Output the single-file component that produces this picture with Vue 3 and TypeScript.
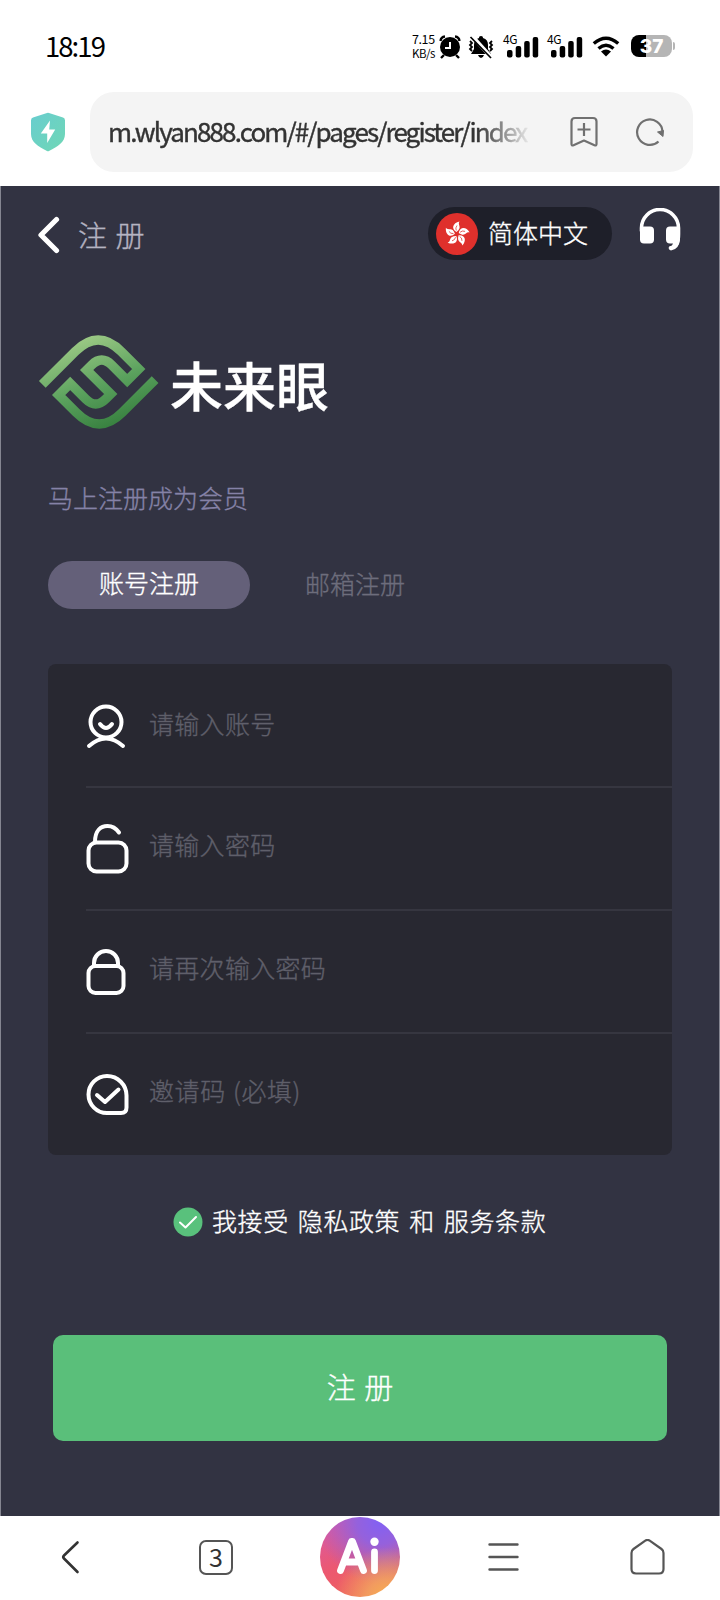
<script setup lang="ts">
interface Field {
  icon: 'user' | 'unlock' | 'lock' | 'check'
  type: string
  placeholder: string
}

const fields: Field[] = [
  { icon: 'user', type: 'text', placeholder: '请输入账号' },
  { icon: 'unlock', type: 'password', placeholder: '请输入密码' },
  { icon: 'lock', type: 'password', placeholder: '请再次输入密码' },
  { icon: 'check', type: 'text', placeholder: '邀请码 (必填)' },
]
const petals: number[] = [0, 72, 144, 216, 288]
</script>

<template>
  <div class="screen">
    <header class="status">
      <span class="clock">18:19</span>
      <div class="indicators">
        <div class="rate"><span>7.15</span><span class="unit">KB/s</span></div>
        <svg class="alarm" width="22" height="24" viewBox="0 0 22 24">
          <path d="M1.500 6Q2 2 6 1.500M16 1.500q4 .5 4.500 4.500M5 20l-3 3M17 20l3 3" fill="none" stroke="#000" stroke-width="2.400" />
          <circle cx="11" cy="12" r="10" />
          <path d="M11 7v6H6" fill="none" stroke="#fff" stroke-width="2" />
        </svg>
        <svg class="bell" width="26" height="24" viewBox="0 0 26 24">
          <path d="M13 1c1.500 0 2 .7 2 2 3.500 1 5 3.500 5 7v4l3 5H3l3-5v-4c0-3.500 1.500-6 5-7 0-1.300.5-2 2-2zM10 20h6q-1 3-3 3t-3-3z" />
          <path d="M2 6l2 2-2 2 2 2-2 2 2 2M24 6l-2 2 2 2-2 2 2 2-2 2" fill="none" stroke="#000" stroke-width="1.800" />
          <path d="M4 1l20 22" stroke="#fff" stroke-width="4" />
          <path d="M2.500 2l20.500 21" stroke="#000" stroke-width="1.700" />
        </svg>
        <div v-for="n in 2" :key="n" class="signal">
          <span class="net">4G</span>
          <svg width="36" height="26" viewBox="0 0 36 26">
            <rect x="4" y="18" width="5.500" height="7.500" rx="2" /><rect x="12.700" y="14" width="5.500" height="11.500" rx="2" />
            <rect x="21.200" y="9" width="5.500" height="16.500" rx="2" /><rect x="29.700" y="5" width="5.500" height="20.500" rx="2" />
          </svg>
        </div>
        <svg class="wifi" width="28" height="21" viewBox="0 0 28 21">
          <path d="M1.800 7.500Q14-3.200 26.200 7.500M6.500 12.500q7.500-6.500 15 0" fill="none" stroke="#000" stroke-width="3.400" />
          <path d="M9 15.500q5-4 10 0L14 20.500z" />
        </svg>
        <div class="battery"><span>37</span></div>
      </div>
    </header>

    <div class="browser">
      <svg class="shield" width="36" height="40" viewBox="0 0 36 40">
        <defs><linearGradient id="mint" x1="0" y1="0" x2="1" y2="1"><stop stop-color="#68cdcf" /><stop offset="1" stop-color="#70d7b5" /></linearGradient></defs>
        <path d="M17 1q1-.6 2 0l14 4.500q2 .7 2 3V22c0 8-7 12.500-16 17q-1 .5-2 0C8 34.500 1 30 1 22V8.500q0-2.300 2-3z" fill="url(#mint)" />
        <path d="M20 8.500L10.800 21.500h6.400v9.500l8-13.500h-6z" fill="#fff" />
      </svg>
      <div class="address">
        <span class="url">m.wlyan888.com/#/pages/register/index</span>
        <svg class="bookmark" width="28" height="32" viewBox="0 0 28 32" fill="none" stroke="#707070" stroke-width="2.200" stroke-linejoin="round">
          <path d="M5 2h18q3.500 0 3.500 3.500V28q0 2-2 1.300L14 24.500 3.500 29.300q-2 .7-2-1.300V5.500Q1.500 2 5 2zM7.500 13.500h13M14 7v13" />
        </svg>
        <svg class="reload" width="30" height="30" viewBox="0 0 30 30">
          <path d="M23.500 24.500a12.700 12.700 0 1 1 4-10" fill="none" stroke="#707070" stroke-width="2.200" />
          <path d="M22.500 15l6-1.500-.5 6z" fill="#707070" stroke="#707070" stroke-linejoin="round" />
        </svg>
      </div>
    </div>

    <main class="page">
      <nav class="topbar">
        <svg class="back" width="24" height="38" viewBox="0 0 24 38"><path d="M19.500 3.500L4 19 19.500 34.500" fill="none" stroke="#fff" stroke-width="5.200" stroke-linecap="round" stroke-linejoin="round" /></svg>
        <h1>注 册</h1>
        <button class="language">
          <svg width="42" height="42" viewBox="-21 -21 42 42">
            <circle r="21" fill="#df302c" />
            <g v-for="angle in petals" :key="angle" :transform="`rotate(${angle})`">
              <path d="M-.5-2C-6-5-4.500-11 2.500-12.500 0-9 6-7-.5-2z" fill="#fff" />
              <path d="M-.7-3.500Q-2-6 0-8.500" fill="none" stroke="#df302c" stroke-width=".7" />
            </g>
          </svg>
          <span>简体中文</span>
        </button>
        <svg class="support" width="42" height="43" viewBox="0 0 42 43">
          <path d="M2.500 23v-3a18.500 18.500 0 0 1 37 0v6c0 7-1 12.500-8 14" fill="none" stroke="#fff" stroke-width="3.600" stroke-linecap="round" />
          <rect x="1" y="18.500" width="14" height="17" rx="4" fill="#fff" /><path d="M31 18.500h10v13q-1 10-9 11-2.500-1-1.500-4 3-.3 3.500-3h-3q-4 0-4-4v-9q0-4 4-4z" fill="#fff" />
        </svg>
      </nav>

      <div class="brand">
        <svg width="122" height="96" viewBox="0 0 122 96">
          <defs><linearGradient id="leaf" gradientUnits="userSpaceOnUse" x1="-25" y1="-45" x2="10" y2="47"><stop stop-color="#a1cc88" /><stop offset=".55" stop-color="#5ba25e" /><stop offset="1" stop-color="#37803f" /></linearGradient></defs>
          <path transform="translate(60.700 47)" fill="none" stroke="url(#leaf)" stroke-width="9.500" d="M-56.400 2.300L-23.500-30.500Q-.5-53.500 22.500-30.500L40-13 28.500-1.500 13-17Q3-27-7-17L-12-12 12 12 7 17Q-3 27-13 17L-28.500 1.500-40 13-22.500 30.500Q.5 53.500 23.500 30.500L56.400-2.300" />
        </svg>
        <strong>未来眼</strong>
      </div>
      <p class="intro">马上注册成为会员</p>

      <div class="tabs">
        <button class="tab active">账号注册</button>
        <button class="tab">邮箱注册</button>
      </div>

      <form class="card" @submit.prevent>
        <label v-for="field in fields" :key="field.icon" class="field">
          <svg width="44" height="52" viewBox="0 0 44 52" fill="none" stroke="#fff" stroke-width="4" stroke-linecap="round" stroke-linejoin="round">
            <template v-if="field.icon === 'user'"><circle cx="20" cy="23" r="15.500" /><path d="M14 25q6 8 12 0M3 47q17-15 34 0" /></template>
            <template v-else-if="field.icon === 'unlock'"><rect x="2.500" y="19.500" width="38" height="29" rx="8" /><path d="M9 19C9 7 15 3 21.500 3q7 0 11.500 6.500" /></template>
            <template v-else-if="field.icon === 'lock'"><rect x="2.500" y="20" width="35" height="27" rx="7" /><path d="M8 20v-3a12 12 0 0 1 24 0v3" /></template>
            <template v-else><path d="M21 7a19.500 19.500 0 0 1 19.500 19.500V38.500q0 5.500-5.500 5.500H21A18.500 18.500 0 0 1 21 7zM11 26l8 7L32.500 20.500" /></template>
          </svg>
          <input :class="field.icon" :type="field.type" :placeholder="field.placeholder" />
        </label>
      </form>

      <div class="agreement">
        <svg width="30" height="30" viewBox="0 0 30 30"><circle cx="15" cy="15" r="14.500" fill="#59c17c" /><path d="M7 15.500l5.500 5L23 10" fill="none" stroke="#fff" stroke-width="2" stroke-linecap="round" stroke-linejoin="round" /></svg>
        <span>我接受</span><a>隐私政策</a><span>和</span><a>服务条款</a>
      </div>
      <button class="submit">注 册</button>
    </main>

    <footer class="toolbar">
      <svg width="36" height="36" viewBox="0 0 36 36" fill="none" stroke="#333" stroke-width="2.600" stroke-linecap="round" stroke-linejoin="round"><path d="M23.500 3.500L10 16.500q-1.500 1.500 0 3L23.500 33" /></svg>
      <div class="pages"><span>3</span></div>
      <div class="assistant">
        <svg width="48" height="40" viewBox="0 0 48 40" role="img" aria-label="Ai" fill="none" stroke="#fff" stroke-width="6.800" stroke-linecap="round" stroke-linejoin="round">
          <path d="M4.500 33.500L15.500 4.500h1l11 29M9 25h15M38.500 15v18.500" /><circle cx="38.500" cy="4.700" r="4.200" fill="#fff" stroke="none" />
        </svg>
      </div>
      <svg width="36" height="36" viewBox="0 0 36 36" fill="none" stroke="#555" stroke-width="2.400" stroke-linecap="round"><path d="M3.500 5.500h28M3.500 18h28M3.500 30.500h28" /></svg>
      <svg width="36" height="36" viewBox="0 0 36 36" fill="none" stroke="#555" stroke-width="2.200" stroke-linejoin="round"><path d="M15.300 1.700q2.200-1.500 4.400 0L31.500 10q2 1.500 2 4v16q0 4.500-4.500 4.500H6Q1.500 34.500 1.500 30V14q0-2.500 2-4z" /></svg>
    </footer>
  </div>
</template>

<style>
body { margin: 0; background: #fff; }
</style>
<style scoped>
.screen { width: 720px; height: 1600px; overflow: hidden; display: flex; flex-direction: column; background: #fff; font-family: "Noto Sans CJK SC", sans-serif; font-weight: 300; }
svg { display: block; flex: none; }
button { border: 0; padding: 0; background: none; font: inherit; color: inherit; white-space: nowrap; }
.status { height: 92px; box-sizing: border-box; display: flex; justify-content: space-between; padding: 33px 48px 0 45px; }
.clock { font-size: 27.500px; line-height: 25px; letter-spacing: -1.950px; color: #000; font-weight: 400; }
.indicators { display: flex; align-items: flex-start; }
.rate { display: flex; flex-direction: column; width: 27px; margin-top: -1px; font-size: 12.500px; line-height: 14px; font-weight: 400; letter-spacing: -.4px; }
.unit { font-size: 11.500px; letter-spacing: -.5px; }
.alarm { margin: 2px 0 0; }
.bell { margin: 2px 9px 0 7px; }
.signal { position: relative; margin: -1px 8px 0 0; }
.net { position: absolute; left: 0; top: 0; font-size: 12px; line-height: 13px; letter-spacing: -.5px; font-weight: 400; color: #000; }
.wifi { margin: 3px 11px 0 1px; }
.battery { position: relative; margin-top: 2px; width: 41px; height: 22px; border-radius: 8px; background: linear-gradient(90deg, #000 37%, #b5b5b5 37%); color: #fff; text-align: center; font: 800 19px/23px Inter, sans-serif; }
.battery::after { content: ""; position: absolute; right: -3px; top: 7px; width: 2px; height: 8px; border-radius: 0 3px 3px 0; background: #b5b5b5; }
.browser { height: 94px; display: flex; align-items: flex-start; padding: 0 27px 0 30px; }
.shield { margin-top: 20px; }
.address { margin-left: 24px; width: 603px; height: 80px; box-sizing: border-box; border-radius: 24px; background: #f4f4f4; display: flex; align-items: center; padding: 0 28px 0 18px; }
.url { width: 420px; margin-top: -2px; font-size: 26px; line-height: 40px; letter-spacing: -1.900px; color: #333; font-weight: 400; -webkit-text-stroke: .4px #333; white-space: nowrap; -webkit-mask-image: linear-gradient(90deg, #000 88%, transparent 101%); mask-image: linear-gradient(90deg, #000 88%, transparent 101%); }
.bookmark { margin-left: 42px; }
.reload { margin-left: 37px; }
.page { flex: none; height: 1330px; box-sizing: border-box; background: #323342; border-left: 1px solid #858691; border-right: 1px solid #858691; overflow: hidden; -webkit-text-stroke: .35px currentColor; }
.topbar { height: 98px; display: flex; align-items: center; padding-left: 36px; box-sizing: border-box; }
h1 { flex: none; margin: -2px 0 0 6px; padding-left: 11px; box-sizing: border-box; width: 361px; font-size: 29px; line-height: 40px; word-spacing: 2px; font-weight: 300; color: #b5b4c2; }
.back { margin-top: -1px; }
.language { width: 184px; height: 53px; flex: none; border-radius: 27px; display: flex; align-items: center; background: #1e1f29; color: #fff; font-size: 25px; margin-top: -3px; }
.language svg { margin: 0 10px 0 8px; }
.language span { margin-top: -3px; }
.support { margin: -11px 0 0 27px; }
.brand { display: flex; align-items: center; height: 96px; margin: 51px 0 0 37px; }
.brand strong { margin: 2px 0 0 10px; font-size: 53px; line-height: 70px; color: #fff; font-weight: 500; }
.intro { margin: 46px 0 0 47px; font-size: 25px; line-height: 40px; color: #8582a7; }
.tabs { margin: 44px 0 0 47px; display: flex; }
.tab { width: 202px; height: 48px; border-radius: 24px; font-size: 25px; line-height: 43px; padding-bottom: 5px; color: #6d6d7c; }
.tab + .tab { margin-left: 4px; padding-bottom: 3px; line-height: 45px; }
.tab.active { background: #646079; color: #fff; }
.card { margin: 55px 0 0 47px; width: 624px; height: 491px; border-radius: 8px; background: #282831; overflow: hidden; }
.field { height: 123px; margin-left: 38px; box-sizing: border-box; display: flex; align-items: center; border-bottom: 2px solid #363640; }
.field:first-child { height: 124px; }
.field:last-child { border: 0; height: 121px; }
.field input { margin: -9px 0 0 19px; padding: 0; width: 500px; height: 40px; border: 0; outline: 0; background: transparent; font: inherit; font-size: 25px; letter-spacing: .3px; color: #fff; }
.field input.user { margin-top: -5px; }
.field input.check { word-spacing: 1px; letter-spacing: .6px; }
.field input::placeholder { color: #5f5f6a; opacity: 1; }
.agreement { height: 40px; margin: 47px 0 0 172px; display: flex; align-items: center; gap: 9px; color: #fff; font-size: 25px; letter-spacing: .6px; line-height: 36px; white-space: nowrap; }
.agreement span, .agreement a { margin-top: -5px; }
.submit { display: block; margin: 93px 0 0 52px; width: 614px; height: 106px; border-radius: 10px; background: #5abf7a; color: #fff; font-size: 29px; word-spacing: 2px; padding-bottom: 5px; }
.toolbar { flex: none; height: 84px; box-sizing: border-box; padding-bottom: 2px; display: grid; grid-template-columns: repeat(5, 144px); place-items: center; }
.pages { width: 30px; height: 31px; border: 2px solid #555; border-radius: 7px; text-align: center; font: 400 25px/28px "Noto Sans CJK SC", sans-serif; color: #333; }
.assistant { width: 80px; height: 80px; border-radius: 50%; display: grid; place-items: center; background: radial-gradient(circle at 85% 105%, #f8b34d 0, #f3aa5fcc 20%, transparent 50%), radial-gradient(circle at 75% 5%, #8261f4 0, #9561dc 24%, transparent 65%), linear-gradient(155deg, #d75aad, #ec5870 50%, #ef6555); }
</style>
